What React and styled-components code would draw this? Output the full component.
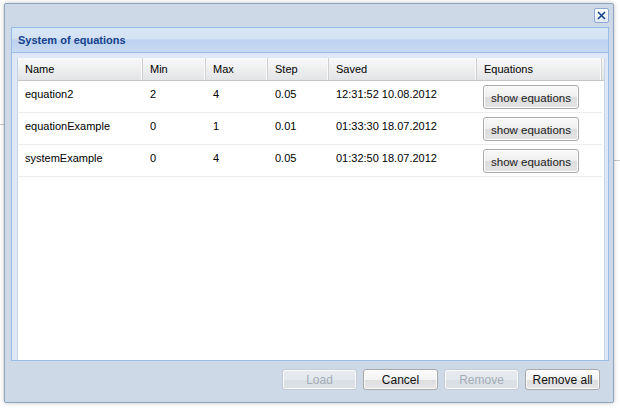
import React from "react";
import styled, { createGlobalStyle } from "styled-components";

const Global = createGlobalStyle`
  html, body {
    margin: 0;
    padding: 0;
    background: #ffffff;
  }
  body {
    width: 620px;
    height: 408px;
    overflow: hidden;
    font-family: "Liberation Sans", Arial, sans-serif;
    font-size: 11px;
  }
`;

// the page behind the modal: only two thin separator lines show at its edges
const Page = styled.div`
  position: relative;
  width: 620px;
  height: 408px;
  background:
    linear-gradient(#c9c9c9, #c9c9c9) 0 124px / 6px 1px no-repeat,
    linear-gradient(#c9c9c9, #c9c9c9) 612px 160px / 8px 1px no-repeat,
    #ffffff;
`;

const Win = styled.div`
  position: absolute;
  left: 4px;
  top: 3px;
  width: 608px;
  height: 398px;
  border: 1px solid #8ea4c1;
  border-radius: 2px;
  background: #ced9e7;
  box-shadow: 0 0 4px rgba(0, 0, 0, 0.25);
  display: flex;
  flex-direction: column;
`;

const WinTop = styled.div`
  height: 23px;
  display: flex;
  justify-content: flex-end;
  align-items: flex-start;
  padding: 4px 4px 0 0;
  box-sizing: border-box;
`;

const CloseBtn = styled.div`
  width: 13px;
  height: 13px;
  border: 1px solid #8daad6;
  border-radius: 2px;
  background: linear-gradient(#ffffff, #dfe9f6);
  display: flex;
  align-items: center;
  justify-content: center;
`;

const Panel = styled.div`
  margin-left: 6px;
  width: 596px;
  height: 332px;
  border: 1px solid #99bbe8;
  display: flex;
  flex-direction: column;
`;

const PanelHeader = styled.div`
  height: 24px;
  border-bottom: 1px solid #99bbe8;
  background: linear-gradient(
    #dae7f6 0%,
    #d3e1f4 45%,
    #c0d5f0 50%,
    #bdd2ef 55%,
    #c9dbf2 100%
  );
  display: flex;
  align-items: center;
  padding-left: 6px;
  font-weight: bold;
  font-size: 11px;
  color: #15428b;
`;

const PanelBody = styled.div`
  flex: 1;
  background: #dfe8f6;
  padding: 5px 3px 0 5px;
  display: flex;
`;

const Grid = styled.div`
  flex: 1;
  background: #ffffff;
  border-left: 1px solid #c5d3e6;
  border-right: 1px solid #c5d3e6;
  display: flex;
  flex-direction: column;
`;

const HeadRow = styled.div`
  height: 22px;
  display: flex;
  border-bottom: 1px solid #c5c5c5;
  background: linear-gradient(#f9f9f9, #e3e4e6);
`;

const HeadCell = styled.div`
  width: ${(p) => p.w}px;
  box-sizing: border-box;
  padding-left: 7px;
  display: flex;
  align-items: center;
  color: #000;
  border-right: 1px solid #d0d0d0;
  box-shadow: inset -1px 0 0 #fafafa;
`;

const Row = styled.div`
  height: 31px;
  display: flex;
  border-bottom: 1px solid #ededed;
  margin-right: 2px;
`;

const Cell = styled.div`
  width: ${(p) => p.w}px;
  box-sizing: border-box;
  padding: ${(p) => (p.btn ? "4px 0 0 6px" : "7px 0 0 7px")};
  color: #000;
  font-size: 11px;
  line-height: 13px;
`;

const GridButton = styled.button`
  width: 96px;
  height: 24px;
  border: 1px solid #a9a9a9;
  border-radius: 3px;
  background: linear-gradient(#f8f8f8 0%, #f0f0f0 48%, #dcdcdc 52%, #e4e4e4 100%);
  font-family: "Liberation Sans", Arial, sans-serif;
  font-size: 11.5px;
  color: #222;
  padding: 2px 0 0 0;
  box-shadow: inset 0 0 0 1px #ffffff;
`;

const Toolbar = styled.div`
  flex: 1;
  display: flex;
  justify-content: flex-end;
  align-items: flex-start;
  gap: 6px;
  padding: 8px 13px 0 0;
`;

const Btn = styled.button`
  width: 75px;
  height: 21px;
  border: 1px solid ${(p) => (p.disabled ? "#c4ccd6" : "#a9a9a9")};
  border-radius: 3px;
  background: ${(p) =>
    p.disabled
      ? "linear-gradient(#e6ebf1 0%, #e3e8ee 50%, #d9dfe5 52%, #dde2e8 100%)"
      : "linear-gradient(#fbfbfb 0%, #f3f3f3 50%, #dedede 52%, #e6e6e6 100%)"};
  font-family: "Liberation Sans", Arial, sans-serif;
  font-size: 12px;
  color: ${(p) => (p.disabled ? "#a4adb7" : "#111")};
  padding: 0;
  box-shadow: inset 0 0 0 1px rgba(255, 255, 255, 0.8);
`;

const columns = [
  { key: "name", title: "Name", w: 125 },
  { key: "min", title: "Min", w: 63 },
  { key: "max", title: "Max", w: 62 },
  { key: "step", title: "Step", w: 61 },
  { key: "saved", title: "Saved", w: 148 },
  { key: "eq", title: "Equations", w: 125 },
];

const rows = [
  { name: "equation2", min: "2", max: "4", step: "0.05", saved: "12:31:52 10.08.2012" },
  { name: "equationExample", min: "0", max: "1", step: "0.01", saved: "01:33:30 18.07.2012" },
  { name: "systemExample", min: "0", max: "4", step: "0.05", saved: "01:32:50 18.07.2012" },
];

export default function App() {
  return (
    <Page>
      <Global />
      <Win>
        <WinTop>
          <CloseBtn>
            <svg width="9" height="9" viewBox="0 0 9 9">
              <path d="M1 1 L8 8 M8 1 L1 8" stroke="#15428b" strokeWidth="1.6" />
            </svg>
          </CloseBtn>
        </WinTop>
        <Panel>
          <PanelHeader>System of equations</PanelHeader>
          <PanelBody>
            <Grid>
              <HeadRow>
                {columns.map((c) => (
                  <HeadCell key={c.key} w={c.w}>
                    {c.title}
                  </HeadCell>
                ))}
              </HeadRow>
              {rows.map((r) => (
                <Row key={r.name}>
                  {columns.map((c) =>
                    c.key === "eq" ? (
                      <Cell key={c.key} w={c.w} btn>
                        <GridButton>show equations</GridButton>
                      </Cell>
                    ) : (
                      <Cell key={c.key} w={c.w}>
                        {r[c.key]}
                      </Cell>
                    )
                  )}
                </Row>
              ))}
            </Grid>
          </PanelBody>
        </Panel>
        <Toolbar>
          <Btn disabled>Load</Btn>
          <Btn>Cancel</Btn>
          <Btn disabled>Remove</Btn>
          <Btn>Remove all</Btn>
        </Toolbar>
      </Win>
    </Page>
  );
}
